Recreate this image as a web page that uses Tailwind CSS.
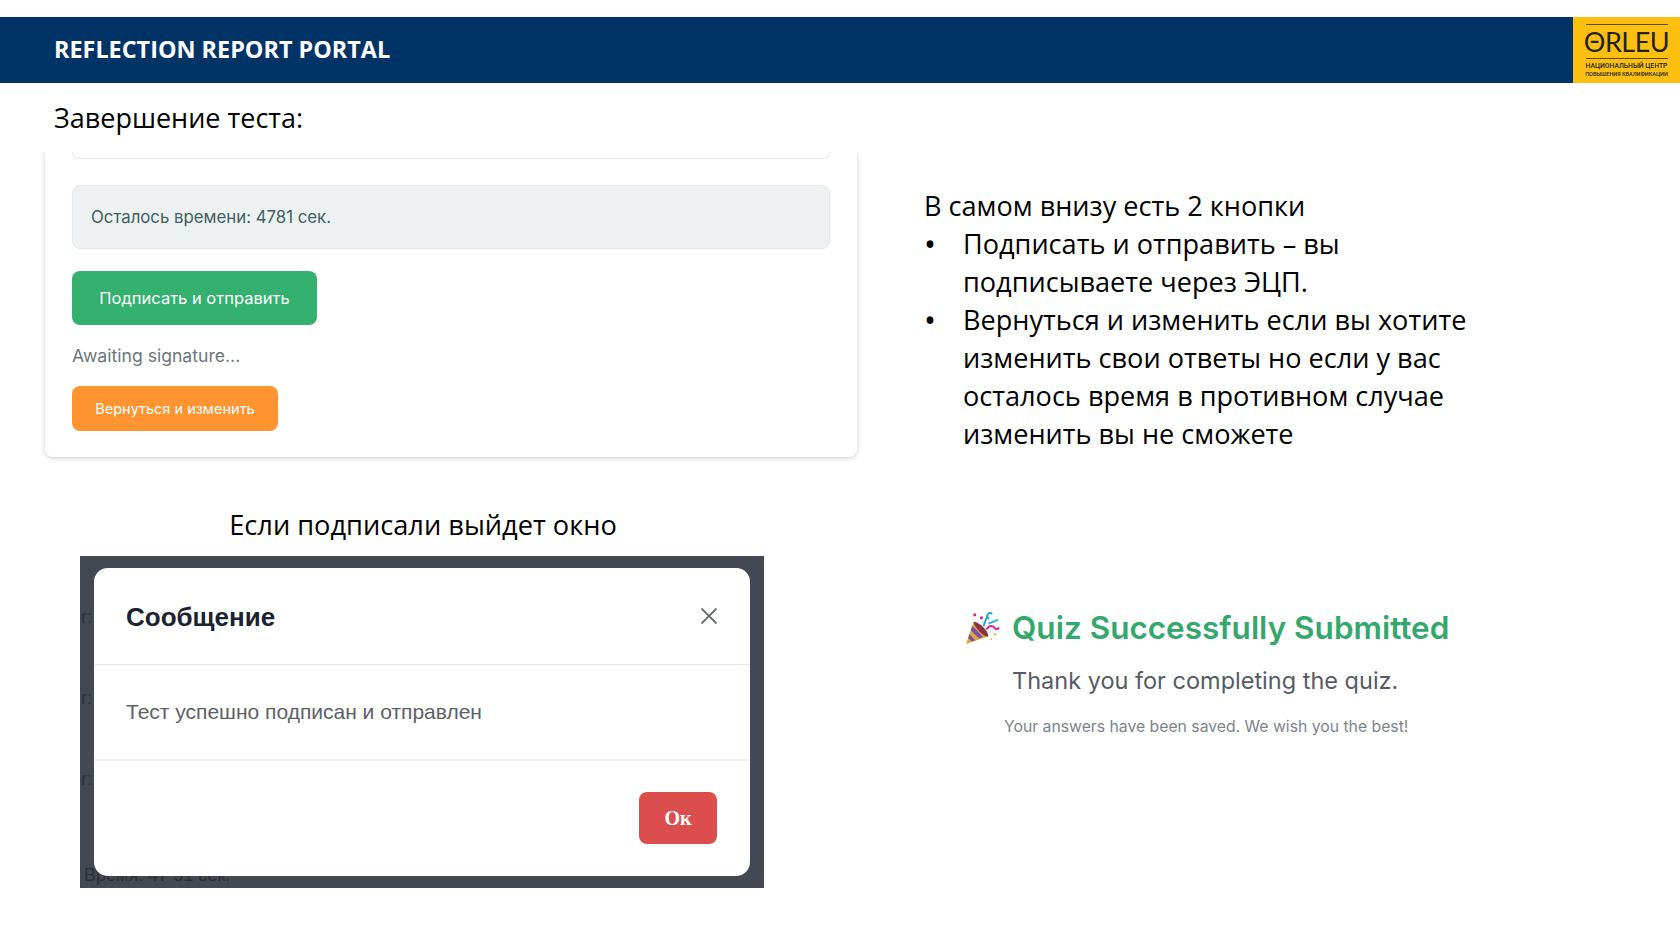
<!DOCTYPE html>
<html lang="en">
<head>
  <meta charset="UTF-8" />
  <title>Reflection Report Portal</title>
  <script src="https://cdn.jsdelivr.net/npm/@tailwindcss/browser@4"></script>
</head>
<body class="bg-white w-[1680px] h-[945px] overflow-hidden font-['Open_Sans',sans-serif] text-black">

  <!-- Header -->
  <header class="mt-[17px] h-[66px] bg-[#003366] flex items-center justify-between">
    <h1 class="pl-[54px] text-[23.4px] font-bold text-white">REFLECTION REPORT PORTAL</h1>
    <div class="w-[107px] h-[66px] bg-[#fdc010] flex flex-col items-center pt-[7px] text-[#222]">
      <div class="w-[82px] border-t border-[#5c4a10]"></div>
      <div class="font-['Lato',sans-serif] text-[27px] leading-[31px] tracking-[-0.5px] mt-[1px]">ΘRLEU</div>
      <div class="w-[82px] border-t border-[#5c4a10] mt-[1px]"></div>
      <div class="font-['Roboto',sans-serif] text-[6.8px] leading-[8px] font-medium mt-[3px] whitespace-nowrap">НАЦИОНАЛЬНЫЙ ЦЕНТР</div>
      <div class="font-['Roboto',sans-serif] text-[5.5px] leading-[8px] font-medium whitespace-nowrap">ПОВЫШЕНИЯ КВАЛИФИКАЦИИ</div>
    </div>
  </header>

  <main class="flex">
    <!-- Left column -->
    <section class="w-[924px] shrink-0">
      <p class="pl-[54px] pt-[16px] text-[27px] leading-[38px]">Завершение теста:</p>

      <div class="ml-[45px] mt-[15px] w-[812px] h-[305px] px-[27px] bg-white rounded-b-lg shadow-[0_1px_5px_rgba(0,0,0,0.2)] [clip-path:inset(0_-10px_-10px_-10px)] font-['Inter',sans-serif]">
        <div class="h-[7px] border border-t-0 border-gray-200 rounded-b-lg"></div>
        <div class="mt-[26px] h-[64px] px-[18px] pt-[2px] flex items-center bg-[#edf1f2] border border-[#e3e8ea] rounded-lg text-[16.8px] text-[#3f5f63]">Осталось времени: 4781 сек.</div>
        <button class="mt-[22px] block w-[245px] h-[54px] rounded-lg bg-[#34b06f] text-white text-[16.5px]">Подписать и отправить</button>
        <p class="mt-[19px] text-[17.6px] leading-[24px] text-[#6c757d]">Awaiting signature...</p>
        <button class="mt-[18px] block w-[206px] h-[45px] rounded-lg bg-[#ff9431] text-white text-[14.5px]">Вернуться и изменить</button>
      </div>

      <p class="ml-[80px] mt-[49px] w-[686px] text-center text-[27.2px] leading-[38px]">Если подписали выйдет окно</p>

      <!-- Modal screenshot -->
      <div class="relative ml-[80px] mt-[12px] w-[684px] h-[332px] bg-[#444852] p-[12px_14px] overflow-hidden font-['Liberation_Sans',sans-serif]">
        <span class="absolute left-[1px] top-[48px] text-[18px] text-[#2c3038]">r:</span>
        <span class="absolute left-[1px] top-[129px] text-[18px] text-[#2c3038]">r:</span>
        <span class="absolute left-[1px] top-[210px] text-[18px] text-[#2c3038]">r:</span>
        <span class="absolute left-[4px] top-[306px] text-[18px] text-[#2c3038] whitespace-nowrap">Время: 47 51 сек.</span>
        <div class="relative h-[308px] bg-white rounded-[14px] flex flex-col">
          <div class="h-[97px] px-[32px] pt-[2px] flex items-center justify-between border-b border-[#e8e8e8]">
            <h2 class="text-[26px] font-bold text-[#1b2230]">Сообщение</h2>
            <svg class="w-[18px] h-[18px] text-[#6b7078] -mt-[2px]" viewBox="0 0 18 18" fill="none" stroke="currentColor" stroke-width="1.8"><path d="M1.5 1.5l15 15M16.5 1.5l-15 15"/></svg>
          </div>
          <div class="h-[96px] px-[32px] flex items-center border-b-2 border-[#efefef] text-[21px] text-[#5c6169]">Тест успешно подписан и отправлен</div>
          <div class="flex-1 pl-[32px] pr-[33px] pt-[31px] flex justify-end items-start">
            <button class="w-[78px] h-[52px] rounded-lg bg-[#dc4e4e] text-white text-[20px] font-bold font-['Liberation_Serif',serif]">Ок</button>
          </div>
        </div>
      </div>
    </section>

    <!-- Right column -->
    <section class="flex-1">
      <div class="pt-[104px] w-[560px] text-[27.1px] leading-[38px]">
        <p>В самом внизу есть 2 кнопки</p>
        <ul>
          <li class="flex"><span class="w-[39px] shrink-0 text-[32px]">•</span><span>Подписать и отправить – вы подписываете через ЭЦП.</span></li>
          <li class="flex"><span class="w-[39px] shrink-0 text-[32px]">•</span><span>Вернуться и изменить если вы хотите изменить свои ответы но если у вас осталось время в противном случае изменить вы не сможете</span></li>
        </ul>
      </div>

      <div class="mt-[151px] font-['Inter',sans-serif]">
        <div class="flex items-center gap-[12px] pl-[41px]">
          <svg class="w-[35px] h-[35px]" viewBox="0 0 36 36">
            <path d="M1 35l8-23 15 15z" fill="#d9a93a"/>
            <path d="M4.5 25l6 6-3.5 1.5-3.6-3.6zM7.5 16.5l11 11-4 1.8-8.6-8.6z" fill="#7c4fa8"/>
            <path d="M9 12c5 0 15 9 15 15-3 2-15-9-15-15z" fill="#8a2f45"/>
            <path d="M19 17c1-4 3-8 4-11" fill="none" stroke="#1ca9d6" stroke-width="2"/>
            <path d="M25 9a3 3 0 1 1 3-5" fill="none" stroke="#1ca9d6" stroke-width="2"/>
            <path d="M22 20c3-5 7-4 9-1 1 1 3 1 4-1" fill="none" stroke="#e0218a" stroke-width="2"/>
            <path d="M24 14c3-1 6-2 10-4" fill="none" stroke="#2bb6d8" stroke-width="2"/>
            <circle cx="10" cy="5" r="1.6" fill="#e0218a"/><circle cx="17" cy="8" r="1.6" fill="#e0218a"/>
            <circle cx="31" cy="25" r="1.3" fill="#e8b93a"/><circle cx="27" cy="30" r="1" fill="#e8b93a"/>
          </svg>
          <h2 class="text-[31.5px] font-semibold text-[#34a86c] whitespace-nowrap">Quiz Successfully Submitted</h2>
        </div>
        <p class="mt-[14px] pl-[88px] text-[23.5px] leading-[32px] text-[#555b65]">Thank you for completing the quiz.</p>
        <p class="mt-[18px] pl-[80px] text-[15.75px] leading-[24px] text-[#7d838c]">Your answers have been saved. We wish you the best!</p>
      </div>
    </section>
  </main>
</body>
</html>
